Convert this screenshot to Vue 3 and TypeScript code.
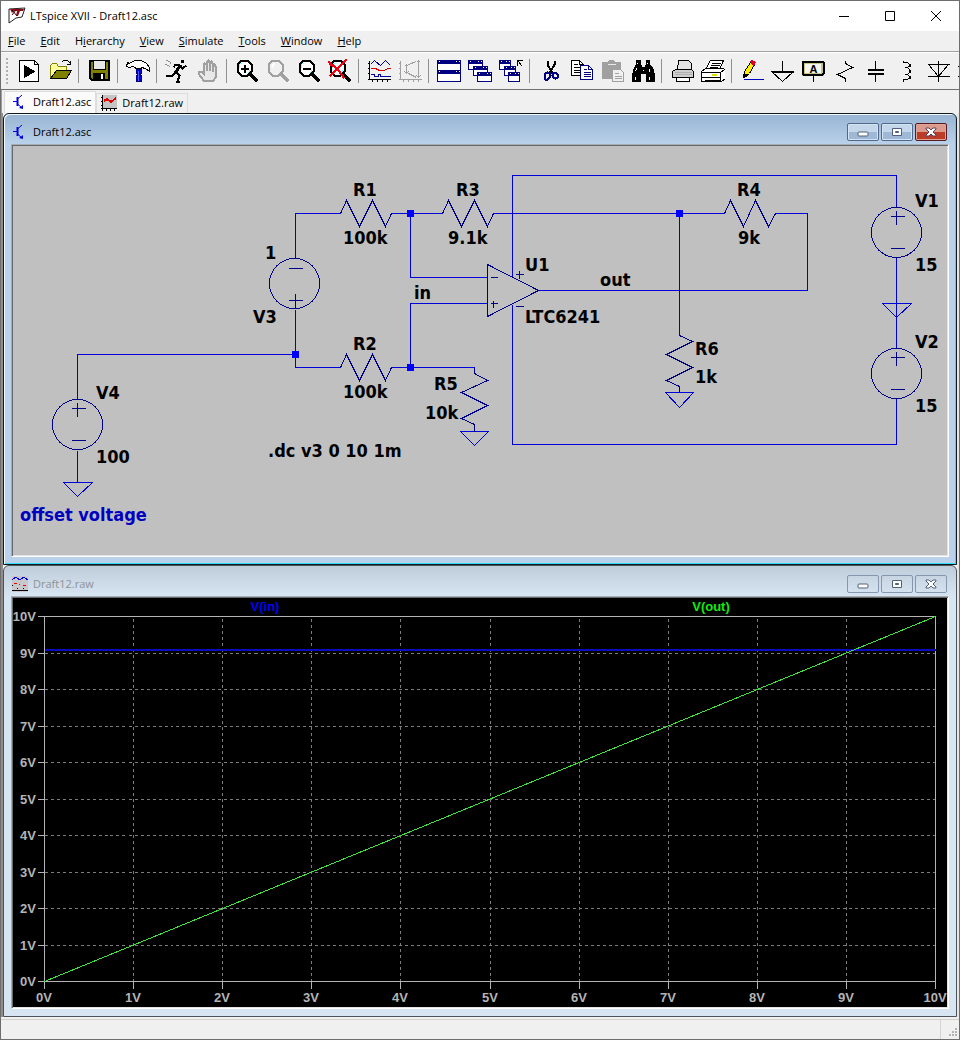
<script setup lang="ts">
interface Shape {
  d: string
  fill?: string
  stroke?: string
  w?: number
}
interface Tool {
  name: string
  shapes: Shape[]
  letter?: string
  disabled?: boolean
}
interface Label {
  x: number
  y: number
  text: string
  comment?: boolean
}

const K = '#000'
const N = '#000080'
const G = '#a0a0a0'
const Y = '#808000'

const menus = [
  ['', 'F', 'ile'],
  ['', 'E', 'dit'],
  ['H', 'i', 'erarchy'],
  ['', 'V', 'iew'],
  ['', 'S', 'imulate'],
  ['', 'T', 'ools'],
  ['', 'W', 'indow'],
  ['', 'H', 'elp'],
]

function lens(color: string, glass: string): Shape[] {
  return [
    { d: 'M6 1H12L16 5V12L12 16H6L2 12V5Z', fill: glass, stroke: color, w: 2 },
    { d: 'M15 15L22 22', stroke: color, w: 4 },
  ]
}
const glints: Shape[] = [
  { d: 'M4 8V5L7 3M14 10V12L12 14', stroke: '#7ff', w: 1 },
]
function miniWindow(x: number, y: number, w: number, h: number): Shape[] {
  return [
    { d: `M${x} ${y}h${w}v${h}h${-w}Z`, fill: '#fff', stroke: N },
    { d: `M${x} ${y}h${w}v3h${-w}Z`, fill: N, stroke: N },
    { d: `M${x + w - 5} ${y + 1}h1M${x + w - 2} ${y + 1}h1M${x + 1} ${y + 1}h1`, stroke: '#fff' },
  ]
}

const groups: Tool[][] = [
  [
    {
      name: 'Run schematic',
      shapes: [
        { d: 'M2 1H17L21 5V22H2Z', fill: '#fff', stroke: K },
        { d: 'M17 1V5H21', stroke: K },
        { d: 'M7 6L17 12L7 18Z', fill: K, stroke: K },
      ],
    },
    {
      name: 'Open',
      shapes: [
        { d: 'M2 19V6L4 4H8L10 7H18V11H8L2 19Z', fill: '#ffff9c', stroke: Y },
        { d: 'M2 19L8 11H23L18 19Z', fill: Y, stroke: K },
        { d: 'M13 3L15 1H19L22 4M22 1V5H18', stroke: K },
      ],
    },
  ],
  [
    {
      name: 'Save',
      shapes: [
        { d: 'M2 1H21V20H4L2 18Z', fill: Y, stroke: K, w: 2 },
        { d: 'M6 1H18V10H6Z', fill: '#e8e8e8', stroke: K },
        { d: 'M6 14H17V20H6Z', fill: K, stroke: K },
        { d: 'M14 15H15V19H14Z', fill: '#fff', stroke: '#fff' },
      ],
    },
  ],
  [
    {
      name: 'Control panel',
      shapes: [
        { d: 'M1 3L3 4L6 2L9 1H15L20 4L23 8V12L19 9L15 8V9H9V8L6 7L3 8L0 7Z', fill: '#fff', stroke: K },
        { d: 'M10 10H15V13L14 15L15 17V22H10V17L11 15L10 13Z', fill: '#0000e0', stroke: N },
        { d: 'M12 11V21', stroke: '#55f' },
      ],
    },
  ],
  [
    {
      name: 'Run',
      shapes: [
        { d: 'M16 1h2v2h-2z', fill: K, stroke: K },
        { d: 'M15 6L10 13', stroke: K, w: 3 },
        { d: 'M14 5H10L8 8M15 6L17 9L21 6M10 13L7 16L1 17M11 13L14 16L12 22H14', stroke: K, w: 2 },
        { d: 'M1 1L4 2L6 5M0 5L3 6L5 8', stroke: '#909090' },
      ],
    },
    {
      name: 'Halt',
      disabled: true,
      shapes: [
        {
          d: 'M7 21L2 14V12H5L7 14V5L8 4L10 5V11V3L12 1L13 3V11V3L15 2L16 4V12V6L18 5L19 7V18L17 21Z',
          fill: '#e8e8e8',
          stroke: G,
          w: 2,
        },
      ],
    },
  ],
  [
    {
      name: 'Zoom in',
      shapes: [...lens(K, '#fff'), ...glints, { d: 'M5 9H13M9 5V13', stroke: K, w: 2 }],
    },
    { name: 'Pan', disabled: true, shapes: [...lens(G, '#f0f0f0'), { d: 'M5 8L8 4', stroke: '#fff', w: 2 }] },
    {
      name: 'Zoom back',
      shapes: [...lens(K, '#fff'), ...glints, { d: 'M5 9H13', stroke: K, w: 2 }],
    },
    {
      name: 'Zoom full extents',
      shapes: [
        ...lens(K, '#e8ffff'),
        ...glints,
        { d: 'M0 2L6 7L10 11L16 19M18 0L10 8L5 13L1 17M1 4L5 7M6 12L3 15', stroke: '#f00010', w: 2 },
      ],
    },
  ],
  [
    {
      name: 'Autorange',
      shapes: [
        { d: 'M2 1V20M0 20H24M0 4H2M0 9H2M0 14H2M5 20V22M10 20V22M15 20V22M20 20V22', stroke: K },
        { d: 'M3 5L7 1L13 6L18 1L23 6', stroke: '#0000a0' },
        { d: 'M3 9H8L12 11H17L20 9H24', stroke: '#e00000' },
        { d: 'M3 15H7V17H11V15H13V17H24', stroke: '#0000a0' },
      ],
    },
    {
      name: 'FFT',
      disabled: true,
      shapes: [
        { d: 'M2 1V20M0 20H24M0 4H2M0 9H2M0 14H2M5 20V22M10 20V22M15 20V22M20 20V22', stroke: G },
        { d: 'M8 5V14M6 7L8 5L10 7M6 12L8 14L10 12M20 1V18M18 3L20 1L22 3M18 16L20 18L22 16M10 5L18 2M10 14L18 18', stroke: G },
      ],
    },
  ],
  [
    { name: 'Tile windows', shapes: [...miniWindow(0, 1, 23, 11), ...miniWindow(0, 11, 23, 11)] },
    {
      name: 'Cascade windows',
      shapes: [...miniWindow(0, 1, 14, 9), ...miniWindow(5, 7, 14, 9), ...miniWindow(9, 13, 14, 9)],
    },
    {
      name: 'Close all windows',
      shapes: [
        ...miniWindow(0, 1, 11, 9),
        ...miniWindow(5, 7, 11, 9),
        ...miniWindow(9, 13, 11, 9),
        { d: 'M18 1H23M18 1V6M18 1L23 7', stroke: K, w: 1 },
      ],
    },
  ],
  [
    {
      name: 'Cut',
      shapes: [
        { d: 'M9 1V5L14 14M16 1V5L11 14', stroke: K, w: 2 },
        { d: 'M7 14L9 13L11 14V18L9 20H7L6 18V16ZM15 13L17 13L19 15V18L17 19L15 18L14 16Z', stroke: N, w: 2 },
      ],
    },
    {
      name: 'Copy',
      shapes: [
        { d: 'M2 1H10L14 5V16H2Z', fill: '#fff', stroke: K },
        { d: 'M4 5H8M4 8H11M4 11H11M4 13H11M10 1V5H14', stroke: K },
        { d: 'M11 6H19L23 10V20H11Z', fill: '#fff', stroke: N },
        { d: 'M14 10H17M14 13H21M14 15H21M14 17H21M19 6V10H23', stroke: N },
      ],
    },
    {
      name: 'Paste',
      disabled: true,
      shapes: [
        { d: 'M2 3H8L9 1H13L14 3H20V19H2Z', fill: G, stroke: G },
        { d: 'M7 5H15', stroke: '#e8e8e8' },
        { d: 'M12 10H20L23 13V22H12Z', fill: '#f0f0f0', stroke: G },
        { d: 'M14 14H18M14 17H21M14 19H21', stroke: G },
      ],
    },
    {
      name: 'Find',
      shapes: [
        { d: 'M5 1H9V5L11 8H13L15 5V1H18V5L21 8L23 15V22H15V14H9V22H1V15L3 8L5 5Z', fill: K, stroke: K },
        { d: 'M6 3V4M16 3V4M5 9L4 12M18 9V12M4 17V20M18 17V20M11 11H12', stroke: '#fff' },
      ],
    },
  ],
  [
    {
      name: 'Print',
      shapes: [
        { d: 'M7 10L8 1H18L21 4V10', fill: '#e4e4e4', stroke: K },
        { d: 'M5 10H21L23 12V18H2V12Z', fill: '#d0d0d0', stroke: K },
        { d: 'M6 18H19V22H6Z', fill: '#fff', stroke: K },
        { d: 'M4 13H21M4 15H21', stroke: '#b0b0b0' },
      ],
    },
    {
      name: 'Print setup',
      shapes: [
        { d: 'M4 10L9 1H22L18 10Z', fill: '#fff', stroke: K },
        { d: 'M10 4H19M9 6H18M8 8H16', stroke: K },
        { d: 'M0 12L4 9H22L24 11V19L20 22H0Z', fill: '#fff', stroke: K },
        { d: 'M0 13H19V22M19 13L23 10M0 18H19M3 21H18', stroke: K },
        { d: 'M10 15H15', stroke: '#dddd00', w: 2 },
      ],
    },
  ],
  [
    {
      name: 'Wire',
      shapes: [
        { d: 'M3 18L4 12L10 3L14 5L9 14Z', fill: '#ffee00', stroke: K },
        { d: 'M3 18L4 14L7 16Z', fill: K, stroke: K },
        { d: 'M10 2L12 1L15 3L13 6Z', fill: '#e00020', stroke: '#e00020' },
        { d: 'M3 20H24', stroke: '#0000c0' },
      ],
    },
    { name: 'Ground', shapes: [{ d: 'M11 1V12M0 12H22L11 22Z', stroke: K }, { d: 'M0 12H22', stroke: K, w: 2 }] },
    {
      name: 'Label net',
      letter: 'A',
      shapes: [
        { d: 'M11 16V22', stroke: K },
        { d: 'M1 3H20V15H1Z', fill: '#f4f4f0', stroke: '#c4c484', w: 3 },
        { d: 'M1 2H20L21 3V14L20 15H1L0 14V3Z', stroke: K, w: 2 },
      ],
    },
    { name: 'Resistor', shapes: [{ d: 'M12 1V4L19 8L4 15L12 19V22', stroke: K }] },
    { name: 'Capacitor', shapes: [{ d: 'M11 1V10M11 14V22', stroke: K }, { d: 'M3 10H19M3 14H19', stroke: K, w: 2 }] },
    {
      name: 'Inductor',
      shapes: [
        { d: 'M8 1V3H12L14 5V6L12 8H9H12L14 10V13L12 15H9H12L14 17V18L12 20H8V22', stroke: K },
        { d: 'M14 4V7M14 10V13M14 16V19', stroke: K, w: 2 },
      ],
    },
    { name: 'Diode', shapes: [{ d: 'M12 1V22M1 5H23M2 5L12 17L22 5M1 17H23', stroke: K }] },
    { name: 'Component', shapes: [{ d: 'M0 7H5M0 17H5', stroke: K }] },
  ],
]

/* Schematic geometry */
const wires = [
  'M295 258V213H340M391 213H442M493 213H724M775 213H807V290H538',
  'M410 213V277H487M487 303H410V367',
  'M295 309V367H340M391 367H474M295 354H77V399M77 450V482',
  'M512 277V175H896V207M512 304V444H896V398M896 257V348M679 213V335',
]
const grounds = [
  'M63 482H92L77 496Z',
  'M460 431H488L474 445Z',
  'M665 392H693L679 407Z',
  'M882 303H911L896 317Z',
]
const parts = [
  'M340 213L346 200L359 226L372 200L385 226L391 213',
  'M442 213L448 200L461 226L474 200L487 226L493 213',
  'M724 213L730 200L743 226L755 200L768 226L775 213',
  'M340 367L346 354L359 380L372 354L385 380L391 367',
  'M474 367V373L487 380L461 392L487 405L461 418L474 424V431',
  'M679 335L692 341L666 354L692 367L666 380L679 386V392',
  'M487 264V316L538 290Z',
  'M490 277H497M490 303H497M493 300V307M515 274H523M519 270V278M515 306H523',
  'M288 268H302M288 300H302M295 293V307',
  'M71 408H85M77 402V416M71 440H85',
  'M890 216H904M896 210V224M890 248H904',
  'M890 357H904M896 351V365M890 389H904',
]
const sources = [
  [294, 283],
  [77, 424],
  [896, 232],
  [896, 373],
]
const nodes = [
  [410, 213],
  [679, 213],
  [295, 354],
  [410, 367],
]
const labels: Label[] = [
  { x: 353, y: 196, text: 'R1' },
  { x: 343, y: 244, text: '100k' },
  { x: 456, y: 196, text: 'R3' },
  { x: 448, y: 244, text: '9.1k' },
  { x: 737, y: 196, text: 'R4' },
  { x: 738, y: 244, text: '9k' },
  { x: 525, y: 271, text: 'U1' },
  { x: 525, y: 323, text: 'LTC6241' },
  { x: 414, y: 299, text: 'in' },
  { x: 600, y: 286, text: 'out' },
  { x: 353, y: 350, text: 'R2' },
  { x: 343, y: 398, text: '100k' },
  { x: 434, y: 390, text: 'R5' },
  { x: 425, y: 419, text: '10k' },
  { x: 695, y: 355, text: 'R6' },
  { x: 695, y: 383, text: '1k' },
  { x: 915, y: 207, text: 'V1' },
  { x: 915, y: 271, text: '15' },
  { x: 915, y: 348, text: 'V2' },
  { x: 915, y: 412, text: '15' },
  { x: 265, y: 259, text: '1' },
  { x: 253, y: 323, text: 'V3' },
  { x: 96, y: 399, text: 'V4' },
  { x: 96, y: 463, text: '100' },
  { x: 268, y: 457, text: '.dc v3 0 10 1m' },
  { x: 20, y: 521, text: 'offset voltage', comment: true },
]

/* Plot geometry: both axes run from 0 V to 10 V */
const plot = { left: 44, right: 935, top: 616, bottom: 981 }
const volts = Array.from({ length: 11 }, (_, i) => i)
const px = (v: number): number => Math.round(plot.left + ((plot.right - plot.left) * v) / 10)
const py = (v: number): number => Math.round(plot.bottom - ((plot.bottom - plot.top) * v) / 10)
</script>

<template>
  <div class="app">
    <header class="titlebar">
      <svg class="logo" width="18" height="18" viewBox="0 0 18 18" aria-hidden="true">
        <path d="M1 2L17 1L14 10L8 11L1 16Z" fill="#fff" stroke="#222" />
        <path d="M2 2H16L15 4H12L10 9H8L9 4H6L4 6Z" fill="#8a0a18" />
        <path d="M4 3L9 9M8 3L4 8" stroke="#3c0008" stroke-width="1" />
      </svg>
      <h1>LTspice XVII - Draft12.asc</h1>
      <div class="sys">
        <button type="button" aria-label="Minimize">
          <svg width="12" height="12" viewBox="0 0 12 12"><path d="M1 6.5H11" stroke="#000" /></svg>
        </button>
        <button type="button" aria-label="Maximize">
          <svg width="12" height="12" viewBox="0 0 12 12"><path d="M1.5 1.5H10.5V10.5H1.5Z" fill="none" stroke="#000" /></svg>
        </button>
        <button type="button" aria-label="Close">
          <svg width="12" height="12" viewBox="0 0 12 12"><path d="M1 1L11 11M11 1L1 11" stroke="#000" /></svg>
        </button>
      </div>
    </header>

    <nav class="menu" aria-label="Main menu">
      <button v-for="m in menus" :key="m.join('')" type="button">{{ m[0] }}<u>{{ m[1] }}</u>{{ m[2] }}</button>
    </nav>

    <div class="toolbar" role="toolbar" aria-label="Toolbar">
      <span class="grip"></span>
      <div v-for="(group, gi) in groups" :key="gi" class="group">
        <button v-for="t in group" :key="t.name" type="button" :aria-label="t.name" :disabled="t.disabled">
          <svg width="24" height="24" viewBox="0 0 24 24" shape-rendering="crispEdges">
            <g transform="translate(.5 .5)">
              <path
                v-for="(s, si) in t.shapes"
                :key="si"
                :d="s.d"
                :fill="s.fill ?? 'none'"
                :stroke="s.stroke"
                :stroke-width="s.w ?? 1"
              />
              <text v-if="t.letter" x="11" y="13" class="icon-letter">{{ t.letter }}</text>
            </g>
          </svg>
        </button>
      </div>
    </div>

    <div class="tabs" role="tablist">
      <button type="button" role="tab" aria-selected="true" class="tab active">
        <svg width="16" height="16" viewBox="0 0 16 16" aria-hidden="true">
          <path d="M1 7.5H5M10 1L5.5 5M5.5 10L10 14" stroke="#0000e0" fill="none" />
          <path d="M5.5 3V12" stroke="#0000e0" stroke-width="2" />
          <path d="M11 15V11L7 14Z" fill="#0000e0" />
        </svg>
        Draft12.asc
      </button>
      <button type="button" role="tab" aria-selected="false" class="tab">
        <svg width="16" height="16" viewBox="0 0 16 16" shape-rendering="crispEdges" aria-hidden="true">
          <path d="M2 0H16V14H2Z" fill="#c4c4c4" />
          <path d="M1.5 0V16M0 13.5H16M0 2.5H2M0 6.5H2M0 10.5H2M5.5 13V16M9.5 13V16M13.5 13V16" stroke="#000" />
          <path d="M3 6L6 4L10 7L15 3" stroke="#e00000" stroke-width="2" fill="none" />
        </svg>
        Draft12.raw
      </button>
    </div>

    <main class="mdi">
      <section class="win focused" aria-label="Draft12.asc">
        <div class="caption">
          <svg width="16" height="16" viewBox="0 0 16 16" aria-hidden="true">
            <path d="M1 7.5H5M10 1L5.5 5M5.5 10L10 14" stroke="#0000e0" fill="none" />
            <path d="M5.5 3V12" stroke="#0000e0" stroke-width="2" />
            <path d="M11 15V11L7 14Z" fill="#0000e0" />
          </svg>
          <h2>Draft12.asc</h2>
          <div class="win-buttons">
            <button type="button" aria-label="Minimize Draft12.asc">
              <svg width="12" height="10" viewBox="0 0 12 10"><rect x="1" y="5" width="10" height="4" rx="1" fill="#fff" stroke="#50607a" /></svg>
            </button>
            <button type="button" aria-label="Maximize Draft12.asc">
              <svg width="12" height="10" viewBox="0 0 12 10">
                <path d="M1.5 1.5H10.5V8.5H1.5ZM4.5 4.5V5.5H7.5V4.5Z" fill="#fff" fill-rule="evenodd" stroke="#50607a" />
              </svg>
            </button>
            <button type="button" class="close" aria-label="Close Draft12.asc">
              <svg width="12" height="10" viewBox="0 0 12 10">
                <path d="M1 1H4L6 3L8 1H11V2L8 5L11 8V9H8L6 7L4 9H1V8L4 5L1 2Z" fill="#fff" stroke="#54425a" />
              </svg>
            </button>
          </div>
        </div>
        <div class="client sheet">
          <svg viewBox="13 146 934 409" role="img" aria-label="Circuit schematic">
            <g transform="translate(.5 .5)" fill="none" shape-rendering="crispEdges">
              <path v-for="d in wires" :key="d" :d="d" class="wire" />
              <path v-for="d in grounds" :key="d" :d="d" class="wire" />
              <path v-for="d in parts" :key="d" :d="d" class="part" />
              <circle v-for="(s, i) in sources" :key="i" :cx="s[0]" :cy="s[1]" r="25" class="part" />
            </g>
            <rect v-for="(n, i) in nodes" :key="i" :x="n[0] - 3" :y="n[1] - 3" width="7" height="7" fill="#00f" />
            <text
              v-for="(l, i) in labels"
              :key="i"
              :x="l.x"
              :y="l.y"
              :class="['label', { comment: l.comment }]"
            >{{ l.text }}</text>
          </svg>
        </div>
      </section>

      <section class="win" aria-label="Draft12.raw">
        <div class="caption">
          <svg width="16" height="16" viewBox="0 0 16 16" shape-rendering="crispEdges" aria-hidden="true">
            <path d="M0 0H16V16H0Z" fill="#c8c8cc" />
            <path d="M0 4L4 1L8 4L12 1L16 4" stroke="#0000e0" fill="none" />
            <path d="M2 7.5H5M7 8.5H8M11 9.5H14" stroke="#f00000" />
            <path d="M0 14.5H16M0 9.5H1M5 12.5H6M11 12.5H12" stroke="#000" />
          </svg>
          <h2>Draft12.raw</h2>
          <div class="win-buttons">
            <button type="button" aria-label="Minimize Draft12.raw">
              <svg width="12" height="10" viewBox="0 0 12 10"><rect x="1" y="5" width="10" height="4" rx="1" fill="#fff" stroke="#50607a" /></svg>
            </button>
            <button type="button" aria-label="Maximize Draft12.raw">
              <svg width="12" height="10" viewBox="0 0 12 10">
                <path d="M1.5 1.5H10.5V8.5H1.5ZM4.5 4.5V5.5H7.5V4.5Z" fill="#fff" fill-rule="evenodd" stroke="#50607a" />
              </svg>
            </button>
            <button type="button" aria-label="Close Draft12.raw">
              <svg width="12" height="10" viewBox="0 0 12 10">
                <path d="M1 1H4L6 3L8 1H11V2L8 5L11 8V9H8L6 7L4 9H1V8L4 5L1 2Z" fill="#fff" stroke="#50607a" />
              </svg>
            </button>
          </div>
        </div>
        <div class="client plot">
          <svg viewBox="13 598 934 409" role="img" aria-label="Waveform plot">
            <g transform="translate(.5 .5)" fill="none" shape-rendering="crispEdges">
              <path v-for="v in volts.slice(1, 10)" :key="'x' + v" :d="`M${px(v)} ${plot.bottom}V${plot.top}`" class="grid" />
              <path v-for="v in volts.slice(1, 10)" :key="'y' + v" :d="`M${plot.left} ${py(v)}H${plot.right}`" class="grid" />
              <path :d="`M${plot.left} ${plot.top}H${plot.right}V${plot.bottom}H${plot.left}Z`" class="axis" />
              <path v-for="v in volts" :key="'t' + v" :d="`M${px(v)} ${plot.bottom}v7M${plot.left} ${py(v)}h-7`" class="axis" />
              <path :d="`M${plot.left} ${py(9.1)}H${plot.right}`" class="line-in" />
              <path :d="`M${plot.left} ${plot.bottom}L${plot.right} ${plot.top}`" class="line-out" />
            </g>
            <text v-for="v in volts" :key="'yl' + v" :x="36" :y="py(v) + 5" text-anchor="end" class="tick">{{ v }}V</text>
            <text v-for="v in volts" :key="'xl' + v" :x="px(v)" y="1002" text-anchor="middle" class="tick">{{ v }}V</text>
            <text x="265" y="611" text-anchor="middle" class="trace-in">V(in)</text>
            <text x="711" y="611" text-anchor="middle" class="trace-out">V(out)</text>
          </svg>
        </div>
      </section>
    </main>

    <footer class="status">
      <div class="pane"></div>
      <svg width="12" height="12" viewBox="0 0 12 12" aria-hidden="true">
        <path
          d="M8 1h2v2h-2zM8 4h2v2h-2zM5 4h2v2h-2zM8 7h2v2h-2zM5 7h2v2h-2zM2 7h2v2h-2z"
          fill="#b4b4b4"
        />
      </svg>
    </footer>
  </div>
</template>

<style>
body {
  margin: 0;
  background: #f0f0f0;
}
</style>

<style scoped>
.app {
  box-sizing: border-box;
  min-height: 100vh;
  display: flex;
  flex-direction: column;
  border: 1px solid #6e6c6e;
  background: #f0f0f0;
  color: #000;
  font: 11px/16px "Open Sans", "Noto Sans", sans-serif;
}
button {
  margin: 0;
  padding: 0;
  border: 0;
  background: none;
  color: inherit;
  font: inherit;
}
h1,
h2 {
  margin: 0;
  font-size: 11px;
  font-weight: 400;
}
svg {
  display: block;
  flex: none;
}

.titlebar {
  display: flex;
  align-items: center;
  height: 30px;
  padding-left: 7px;
  background: #fff;
}
.titlebar h1 {
  flex: 1;
  margin-left: 4px;
}
.sys {
  display: flex;
}
.sys button {
  display: flex;
  align-items: center;
  justify-content: center;
  width: 46px;
  height: 30px;
}

.menu {
  display: flex;
  height: 20px;
  border-bottom: 1px solid #a0a0a0;
}
.menu button {
  padding: 0 8px 0 7px;
}

.toolbar {
  display: flex;
  align-items: center;
  height: 36px;
  overflow: hidden;
  border-top: 1px solid #fff;
  border-bottom: 1px solid #707070;
}
.grip {
  flex: none;
  width: 2px;
  height: 26px;
  margin: 0 6px 0 5px;
  background: repeating-linear-gradient(#b0b0b0 0 2px, transparent 2px 4px);
}
.group {
  display: flex;
  flex: none;
}
.group + .group::before {
  content: "";
  width: 1px;
  margin: 0 5px 0 2px;
  background: #909090;
}
.group button {
  padding: 0 4px 0 3px;
}
.icon-letter {
  font: bold 11px "Liberation Sans", sans-serif;
  text-anchor: middle;
}

.tabs {
  display: flex;
  align-items: flex-end;
  height: 23px;
  padding-left: 2px;
  border-left: 1px solid #a0a0a0;
}
.tab {
  display: flex;
  align-items: center;
  gap: 5px;
  height: 20px;
  padding: 0 4px 2px;
  border: 1px solid #dcdcdc;
  border-bottom: 0;
}
.tab.active {
  height: 22px;
  padding: 0 4px 2px 7px;
  background: #fbfbfb;
}

.mdi {
  display: flex;
  flex-direction: column;
  border-left: 2px solid #908d89;
  border-right: 2px solid #e6e6e6;
}
.win {
  padding: 0 7px 7px;
  border: 1px solid #4c5258;
  border-radius: 6px 6px 0 0;
  background: linear-gradient(#bfcddb, #d7e4f2 30px);
}
.win.focused {
  border-color: #101820;
  background: linear-gradient(#98b4d2, #b9d1ea 30px);
  box-shadow: inset 1px 1px #f2f8fc, inset -1px -1px #30dcf8;
}
.caption {
  display: flex;
  align-items: center;
  gap: 5px;
  height: 24px;
  padding: 6px 2px 0 1px;
}
.caption h2 {
  flex: 1;
}
.win:not(.focused) h2 {
  color: #8c9298;
}
.win-buttons {
  display: flex;
  gap: 2px;
}
.win-buttons button {
  box-sizing: border-box;
  display: flex;
  align-items: center;
  justify-content: center;
  width: 32px;
  height: 18px;
  border: 1px solid #8496b0;
  border-radius: 2px;
}
.focused .win-buttons button {
  border-color: #50688c;
  background: linear-gradient(#c4d6ea 50%, #9fb8d6 50%);
  box-shadow: inset 0 0 0 1px #d4e4f4;
}
.focused .win-buttons .close {
  border-color: #571b24;
  background: linear-gradient(#dc9a8c 50%, #bc3c26 50%);
  box-shadow: inset 0 0 0 1px #e0a498;
}
.client {
  padding: 1px;
  border: 1px solid;
  border-color: #a4acb4 #fff #fff #a4acb4;
  box-shadow: inset 1px 1px #696969, inset -1px -1px #e3e3e3;
}
.client svg {
  width: 100%;
  height: auto;
}
.sheet {
  background: #c0c0c0;
}
.plot {
  background: #000;
}
.wire {
  stroke: #0000d8;
}
.part {
  stroke: #000088;
}
.label {
  font: bold 18px "DejaVu Sans Condensed", "DejaVu Sans", sans-serif;
  fill: #000;
}
.label.comment {
  fill: #0000c0;
}
.grid {
  stroke: #7c7c7c;
  stroke-dasharray: 3 3;
}
.axis {
  stroke: #b4b4b4;
}
.line-in {
  stroke: #0a0ac0;
  stroke-width: 2;
}
.line-out {
  stroke: #3ce43c;
}
.tick,
.trace-in,
.trace-out {
  font: bold 13px "Liberation Sans", sans-serif;
  fill: #b4b4b4;
}
.trace-in {
  fill: #0000ff;
}
.trace-out {
  fill: #10ec10;
}

.status {
  display: flex;
  flex: 1;
  align-items: flex-end;
  min-height: 18px;
  margin-top: 2px;
  border-top: 1px solid #d4d0c8;
}
.pane {
  flex: 1;
  align-self: stretch;
  margin-right: 6px;
  border-right: 1px solid #d4d4d4;
}
</style>
